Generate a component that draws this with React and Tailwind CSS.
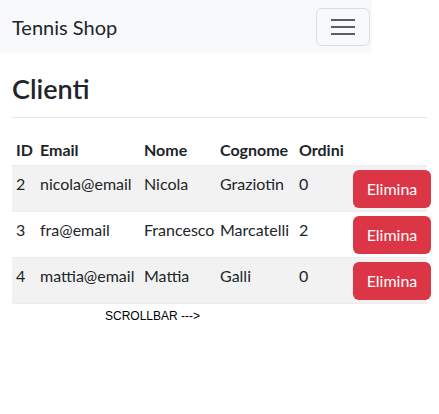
import React from 'react';

const clienti = [
  { id: 2, email: 'nicola@email', nome: 'Nicola', cognome: 'Graziotin', ordini: 0 },
  { id: 3, email: 'fra@email', nome: 'Francesco', cognome: 'Marcatelli', ordini: 2 },
  { id: 4, email: 'mattia@email', nome: 'Mattia', cognome: 'Galli', ordini: 0 },
];

const App = () => {
  return (
    <div className="min-h-screen bg-white text-[#212529] text-base" style={{ fontFamily: 'Lato, sans-serif' }}>
      <nav className="w-[372px] h-[53px] bg-[#f8f9fa] flex items-center justify-between pl-3 pr-[2px]">
        <span className="text-[20px] leading-[30px]">Tennis Shop</span>
        <button className="w-[54px] h-[38px] border border-[#dcdde0] rounded-md flex flex-col items-center justify-center gap-[5px]">
          <span className="block w-6 h-[2px] bg-[#5c5d5e]"></span>
          <span className="block w-6 h-[2px] bg-[#5c5d5e]"></span>
          <span className="block w-6 h-[2px] bg-[#5c5d5e]"></span>
        </button>
      </nav>

      <div className="px-3">
        <h1 className="text-[27px] font-semibold leading-[31px] mt-[20px] mb-2">Clienti</h1>
        <hr className="border-0 border-t border-[#e6e7e9] mt-[13px] mb-4" />

        <table className="w-full table-fixed text-left border-collapse">
          <thead>
            <tr className="border-b border-[#ececec]">
              <th className="w-[24px] px-1 pt-1 pb-[3px] font-bold">ID</th>
              <th className="w-[104px] px-1 pt-1 pb-[3px] font-bold">Email</th>
              <th className="w-[76px] px-1 pt-1 pb-[3px] font-bold">Nome</th>
              <th className="w-[79px] px-1 pt-1 pb-[3px] font-bold">Cognome</th>
              <th className="w-[54px] px-1 pt-1 pb-[3px] font-bold">Ordini</th>
              <th className="px-1 pt-1 pb-[3px]"></th>
            </tr>
          </thead>
          <tbody>
            {clienti.map((c, i) => (
              <tr key={c.id} className={`border-b border-[#ececec] align-top ${i % 2 === 0 ? 'bg-[#f2f2f2]' : 'bg-white'}`}>
                <td className="px-1 pt-[6px] whitespace-nowrap">{c.id}</td>
                <td className="px-1 pt-[6px] whitespace-nowrap">{c.email}</td>
                <td className="px-1 pt-[6px] whitespace-nowrap">{c.nome}</td>
                <td className="px-1 pt-[6px] whitespace-nowrap">{c.cognome}</td>
                <td className="px-1 pt-[6px] whitespace-nowrap">{c.ordini}</td>
                <td className="px-1 pt-1 pb-[3px] text-right">
                  <button className="bg-[#dc3545] text-white text-base rounded-md h-[38px] w-[78px]">Elimina</button>
                </td>
              </tr>
            ))}
          </tbody>
        </table>

        <p className="text-[12px] text-black ml-[93px] mt-[3px]" style={{ fontFamily: '"Liberation Sans", sans-serif' }}>SCROLLBAR ---&gt;</p>
      </div>
    </div>
  );
};

export default App;
